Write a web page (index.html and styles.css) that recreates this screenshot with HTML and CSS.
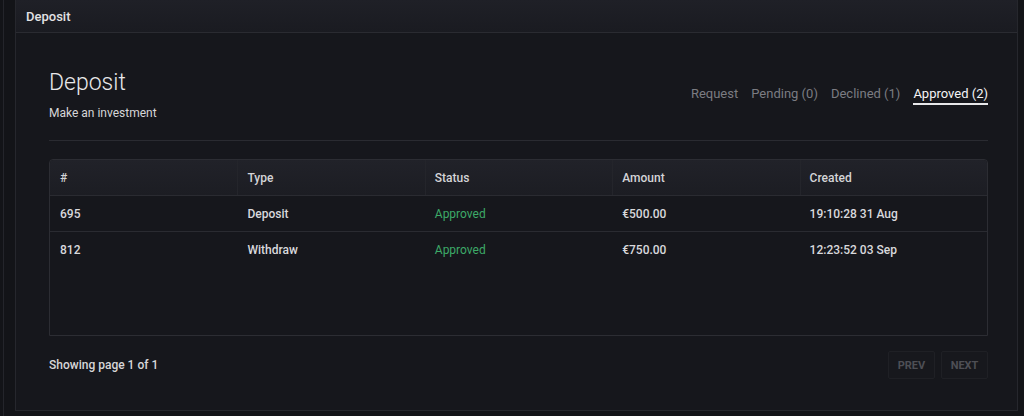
FILE: index.html
```html
<!DOCTYPE html>
<html>
<head>
<meta charset="utf-8">
<link rel="stylesheet" href="styles.css">
</head>
<body>
<div class="shell">
  <div class="rail"></div>
  <div class="card">
    <div class="card-head">Deposit</div>
    <div class="card-body">
      <div class="top">
        <div class="titles">
          <h1 class="title">Deposit</h1>
          <div class="subtitle">Make an investment</div>
        </div>
        <nav class="tabs">
          <span class="tab">Request</span>
          <span class="tab">Pending (0)</span>
          <span class="tab">Declined (1)</span>
          <span class="tab active">Approved (2)</span>
        </nav>
      </div>
      <div class="divider"></div>
      <div class="table">
        <div class="row head">
          <div class="cell">#</div>
          <div class="cell sep">Type</div>
          <div class="cell sep">Status</div>
          <div class="cell sep">Amount</div>
          <div class="cell sep">Created</div>
        </div>
        <div class="row">
          <div class="cell">695</div>
          <div class="cell">Deposit</div>
          <div class="cell ok">Approved</div>
          <div class="cell">€500.00</div>
          <div class="cell">19:10:28 31 Aug</div>
        </div>
        <div class="row last">
          <div class="cell">812</div>
          <div class="cell">Withdraw</div>
          <div class="cell ok">Approved</div>
          <div class="cell">€750.00</div>
          <div class="cell">12:23:52 03 Sep</div>
        </div>
      </div>
      <div class="foot">
        <div class="showing">Showing page 1 of 1</div>
        <div class="pager">
          <span class="btn">PREV</span>
          <span class="btn">NEXT</span>
        </div>
      </div>
    </div>
  </div>
</div>
</body>
</html>
```

FILE: styles.css
```css
* { box-sizing: border-box; }
html, body { margin: 0; height: 100%; }
body {
  background: #131418;
  font-family: Roboto, "Liberation Sans", sans-serif;
  color: #e4e4e6;
}
.shell {
  display: flex;
  height: 416px;
}
.rail {
  width: 4px;
  border-right: 1px solid #24252b;
  margin-right: 11px;
}
.card {
  width: 1003px;
  height: 411px;
  background: #16171c;
  border: 1px solid #26272d;
  border-top: none;
}
.card-head {
  height: 33px;
  padding: 9px 10px 0;
  font-size: 13px;
  font-weight: 500;
  color: #e2e2e4;
  background: linear-gradient(#1f2027, #1a1b21);
  border-bottom: 1px solid #2a2b31;
}
.card-body {
  padding: 36px 29px 0 33px;
}
.top {
  display: flex;
  justify-content: space-between;
  align-items: flex-start;
}
.title {
  margin: 0;
  font-size: 23px;
  font-weight: 300;
  line-height: 28px;
  color: #e8e8ea;
}
.subtitle {
  margin-top: 9px;
  font-size: 12px;
  color: #d6d6d8;
}
.tabs {
  display: flex;
  gap: 13px;
  margin-top: 17px;
}
.tab {
  font-size: 13px;
  color: #7b7c82;
  padding-bottom: 2px;
  border-bottom: 2px solid transparent;
}
.tab.active {
  color: #f4f4f6;
  border-bottom-color: #e8e8ea;
}
.divider {
  height: 1px;
  background: #2a2b31;
  margin-top: 20px;
}
.table {
  margin-top: 18px;
  height: 177px;
  border: 1px solid #2c2d33;
  border-radius: 4px 4px 0 0;
}
.row {
  display: grid;
  grid-template-columns: repeat(5, 1fr);
  height: 36px;
  border-bottom: 1px solid #2a2b31;
  align-items: center;
}
.row.last { border-bottom: none; }
.row.head {
  background: linear-gradient(#212229, #1c1d23);
  border-radius: 4px 4px 0 0;
}
.cell {
  font-size: 12px;
  font-weight: 500;
  color: #d9d9dc;
  padding-left: 10px;
  height: 100%;
  display: flex;
  align-items: center;
}
.row.head .cell { color: #d4d4d7; }
.row.head .cell.sep { box-shadow: inset 1px 0 0 #24252b; }
.cell.ok { color: #3daa68; font-weight: 400; }
.foot {
  display: flex;
  justify-content: space-between;
  align-items: center;
  margin-top: 15px;
}
.showing {
  font-size: 12px;
  font-weight: 500;
  color: #d6d6d8;
}
.pager {
  display: flex;
  gap: 6px;
}
.btn {
  width: 47px;
  height: 28px;
  display: flex;
  align-items: center;
  justify-content: center;
  font-size: 11px;
  font-weight: 700;
  color: #4e4f55;
  background: #17181d;
  border: 1px solid #1f2025;
  border-radius: 2px;
}
```
